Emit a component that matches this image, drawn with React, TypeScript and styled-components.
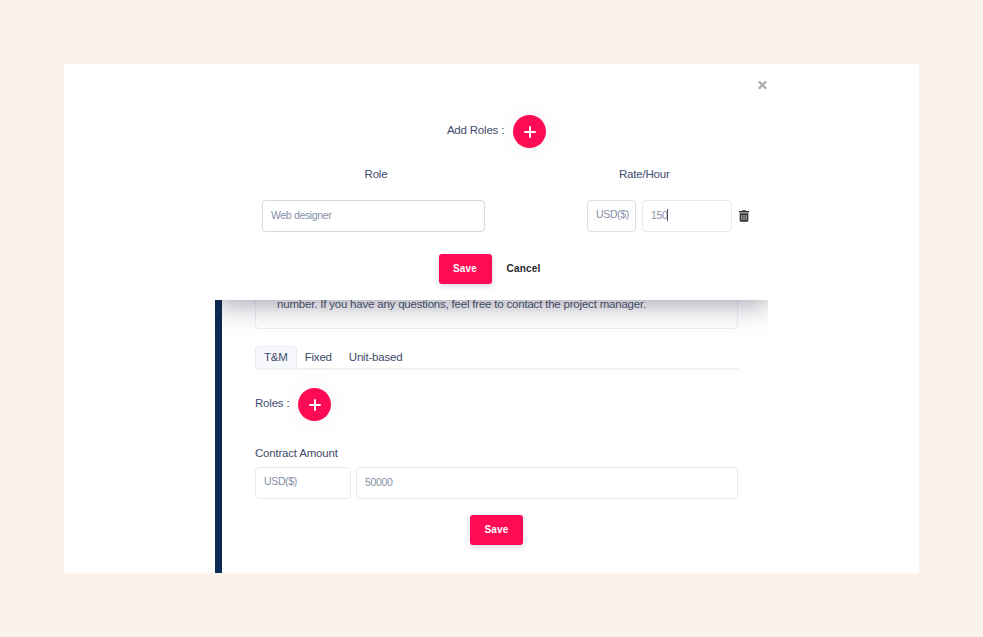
import * as React from 'react';
import styled, { createGlobalStyle } from 'styled-components';
import { FaTimes, FaTrashAlt } from 'react-icons/fa';

const GlobalStyle = createGlobalStyle`
    html, body {
        margin: 0;
        padding: 0;
        background: #faf3e9;
    }
    * {
        box-sizing: border-box;
    }
`

const Frame = styled.div`
    width: 983px;
    height: 637px;
    padding: 64px;
    font-family: "Liberation Sans", Arial, sans-serif;
    font-size: 11.5px;
    letter-spacing: -0.2px;
    color: #414b6b;
`
const Sheet = styled.div`
    width: 855px;
    height: 509px;
    background: #fff;
    padding-left: 151px;
`
const Page = styled.div`
    position: relative;
    display: flex;
    width: 553px;
    height: 100%;
    overflow: hidden;
`
const SideBar = styled.div`
    width: 7px;
    background: #0d2c54;
`
const Content = styled.div`
    flex: 1;
    padding: 221px 30px 0 33px;
`
const Notice = styled.div`
    height: 44px;
    padding: 11px 21px 0;
    border: 1px solid #eceef3;
    border-radius: 4px;
    line-height: 14px;
    white-space: nowrap;
    color: #4d5670;
`
const Tabs = styled.div`
    display: flex;
    margin-top: 17px;
    height: 24px;
    border-bottom: 2px solid #eff1f4;
`
const Tab = styled.div<{ $active?: boolean }>`
    height: 22px;
    margin-right: -1px;
    padding: 0 8px;
    line-height: 21px;
    border: 1px solid ${p => (p.$active ? '#e8ecf3' : 'transparent')};
    border-bottom: 0;
    border-radius: 3px 3px 0 0;
    background: ${p => (p.$active ? '#f7f8fc' : 'transparent')};
`
const AddRow = styled.div<{ $center?: boolean }>`
    display: flex;
    align-items: center;
    gap: 9px;
    justify-content: ${p => (p.$center ? 'center' : 'flex-start')};
`
const AddLabel = styled.span`
    padding-bottom: 3px;
`
const RolesRow = styled(AddRow)`
    margin-top: 18px;
`
const PlusButton = styled.div`
    display: flex;
    align-items: center;
    justify-content: center;
    width: 33px;
    height: 33px;
    border-radius: 50%;
    background: #ff0a54;
    box-shadow: 0 0 24px rgba(40, 40, 80, 0.06);
`
const AmountLabel = styled.div`
    margin-top: 25px;
    height: 14px;
    line-height: 14px;
`
const AmountRow = styled.div`
    display: grid;
    grid-template-columns: 96px 1fr;
    gap: 5px;
    margin-top: 7px;
`
const Field = styled.div<{ $raised?: boolean }>`
    height: 32px;
    padding: ${p => (p.$raised ? '0 0 5px 8px' : '0 0 2px 8px')};
    display: flex;
    align-items: center;
    border: 1px solid #e3eaf1;
    border-radius: 4px;
    background: #fff;
    font-size: 10.5px;
    letter-spacing: -0.35px;
    color: #8490a5;
`
const RoleField = styled(Field)`
    border: 1px solid #d6d9de;
`
const CurrencyField = styled(Field)`
    border: 1px solid #d9dfe4;
`
const Caret = styled.span`
    width: 1px;
    height: 12px;
    background: #4a5068;
`
const SaveRow = styled.div`
    display: flex;
    justify-content: center;
    margin-top: 16px;
`
const SaveButton = styled.div`
    display: flex;
    align-items: center;
    justify-content: center;
    width: 53px;
    height: 30px;
    padding-bottom: 2px;
    border-radius: 3px;
    background: #ff0a54;
    color: #fff;
    font-size: 10px;
    font-weight: 700;
    letter-spacing: 0.2px;
    box-shadow: 0 2px 6px rgba(40, 40, 80, 0.18);
`
const Modal = styled.div`
    position: absolute;
    top: 0;
    left: 0;
    width: 100%;
    height: 236px;
    padding-top: 51px;
    background: #fff;
    box-shadow: 0 4px 26px rgba(30, 30, 60, 0.42);
`
const CloseIcon = styled(FaTimes)`
    position: absolute;
    top: 15px;
    right: 0.5px;
    width: 11px;
    height: 12px;
    color: #ababab;
`
const ModalAddRow = styled(AddRow)`
    padding-left: 10px;
`
const Columns = styled.div`
    display: grid;
    grid-template-columns: 223px 157px;
    column-gap: 102px;
    padding-left: 47px;
`
const Headings = styled(Columns)`
    margin-top: 19px;
    line-height: 14px;
`
const RoleHeading = styled.div`
    padding-left: 5px;
    text-align: center;
`
const RateHeading = styled.div`
    padding-left: 32px;
`
const Inputs = styled(Columns)`
    margin-top: 19px;
`
const RateCell = styled.div`
    display: grid;
    grid-template-columns: 49px 90px 1fr;
    column-gap: 6px;
    align-items: center;
`
const TrashIcon = styled(FaTrashAlt)`
    width: 10px;
    height: 12px;
    margin: 0 0 1px 1px;
    color: #2c2c32;
`
const ModalActions = styled.div`
    display: flex;
    align-items: center;
    justify-content: center;
    gap: 15px;
    margin-top: 22px;
    padding-right: 4px;
`
const CancelButton = styled.div`
    padding-bottom: 2px;
    color: #26262c;
    font-size: 10px;
    font-weight: 700;
    letter-spacing: 0.2px;
`

const PlusIcon: React.FC = () => (
    <svg width="12" height="12" viewBox="0 0 12 12" fill="none">
        <path d="M6 1v10M1 6h10" stroke="#fff" strokeWidth="2" strokeLinecap="round" />
    </svg>
)

export default function App() {
    return (
        <>
            <GlobalStyle />
            <Frame>
                <Sheet>
                    <Page>
                        <SideBar />
                        <Content>
                            <Notice>number. If you have any questions, feel free to contact the project manager.</Notice>
                            <Tabs>
                                <Tab $active>T&amp;M</Tab>
                                <Tab>Fixed</Tab>
                                <Tab>Unit-based</Tab>
                            </Tabs>
                            <RolesRow>
                                <AddLabel>Roles :</AddLabel>
                                <PlusButton><PlusIcon /></PlusButton>
                            </RolesRow>
                            <AmountLabel>Contract Amount</AmountLabel>
                            <AmountRow>
                                <Field $raised>USD($)</Field>
                                <Field>50000</Field>
                            </AmountRow>
                            <SaveRow>
                                <SaveButton>Save</SaveButton>
                            </SaveRow>
                        </Content>
                        <Modal>
                            <CloseIcon />
                            <ModalAddRow $center>
                                <AddLabel>Add Roles :</AddLabel>
                                <PlusButton><PlusIcon /></PlusButton>
                            </ModalAddRow>
                            <Headings>
                                <RoleHeading>Role</RoleHeading>
                                <RateHeading>Rate/Hour</RateHeading>
                            </Headings>
                            <Inputs>
                                <RoleField>Web designer</RoleField>
                                <RateCell>
                                    <CurrencyField $raised>USD($)</CurrencyField>
                                    <Field>150<Caret /></Field>
                                    <TrashIcon />
                                </RateCell>
                            </Inputs>
                            <ModalActions>
                                <SaveButton>Save</SaveButton>
                                <CancelButton>Cancel</CancelButton>
                            </ModalActions>
                        </Modal>
                    </Page>
                </Sheet>
            </Frame>
        </>
    )
}
